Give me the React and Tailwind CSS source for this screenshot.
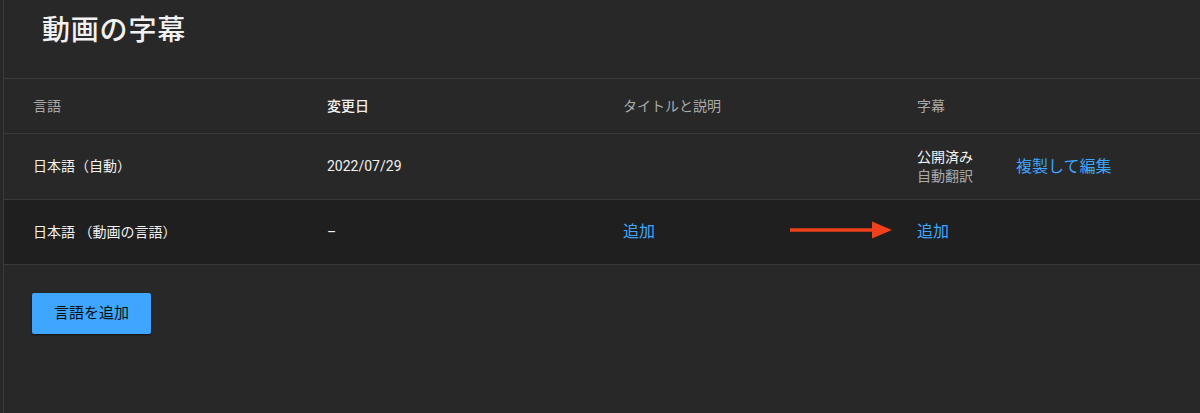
import React from 'react';

const FONT = { fontFamily: "Roboto, 'Noto Sans CJK JP', sans-serif" };

const COLS = 'grid grid-cols-[294px_296px_294px_1fr] pl-[29px]';

export default function App() {
  return (
    <div className="w-[1200px] h-[413px] bg-[#282828] text-[#f1f1f1] overflow-hidden" style={FONT}>
      <div className="ml-[3px] h-full border-l border-[#3a3a3a]">
        {/* title */}
        <div className="h-[79px] pt-[15px] pl-[38px] border-b border-[#3a3a3a]">
          <h1 className="text-[28px] leading-[32px] font-medium tracking-[0.8px]">動画の字幕</h1>
        </div>

        {/* header row */}
        <div className={`${COLS} h-[55px] items-center border-b border-[#3a3a3a] text-[14px] text-[#aaaaaa]`}>
          <div>言語</div>
          <div className="text-[#f1f1f1] font-medium">変更日</div>
          <div>タイトルと説明</div>
          <div>字幕</div>
        </div>

        {/* auto row */}
        <div className={`${COLS} h-[66px] items-center border-b border-[#3a3a3a] text-[14px]`}>
          <div>日本語（自動）</div>
          <div>2022/07/29</div>
          <div />
          <div className="flex items-center gap-[43px]">
            <div className="flex flex-col leading-[19px]">
              <span className="text-[14px] font-normal">公開済み</span>
              <span className="text-[14px] text-[#aaaaaa]">自動翻訳</span>
            </div>
            <button className="text-[16px] text-[#3ea6ff]">複製して編集</button>
          </div>
        </div>

        {/* video language row */}
        <div className={`${COLS} relative h-[65px] items-center bg-[#1f1f1f] border-b border-[#3a3a3a] text-[14px]`}>
          <div>日本語 （動画の言語）</div>
          <div>–</div>
          <div><button className="text-[16px] text-[#3ea6ff]">追加</button></div>
          <div><button className="text-[16px] text-[#3ea6ff]">追加</button></div>
          <svg className="absolute left-[786px] top-[20px]" width="104" height="20" viewBox="0 0 104 20">
            <path d="M0 10 H84" stroke="#f0401c" strokeWidth="3.5" />
            <path d="M82 1.5 L102 10 L82 18.5 Z" fill="#f0401c" />
          </svg>
        </div>

        <div className="pl-[28px] pt-[28px]">
          <button className="h-[41px] w-[119px] rounded-[2px] bg-[#3ea6ff] text-[#0f0f0f] text-[15px] shadow-[0_1px_2px_rgba(0,0,0,0.6)]">
            言語を追加
          </button>
        </div>
      </div>
    </div>
  );
}
